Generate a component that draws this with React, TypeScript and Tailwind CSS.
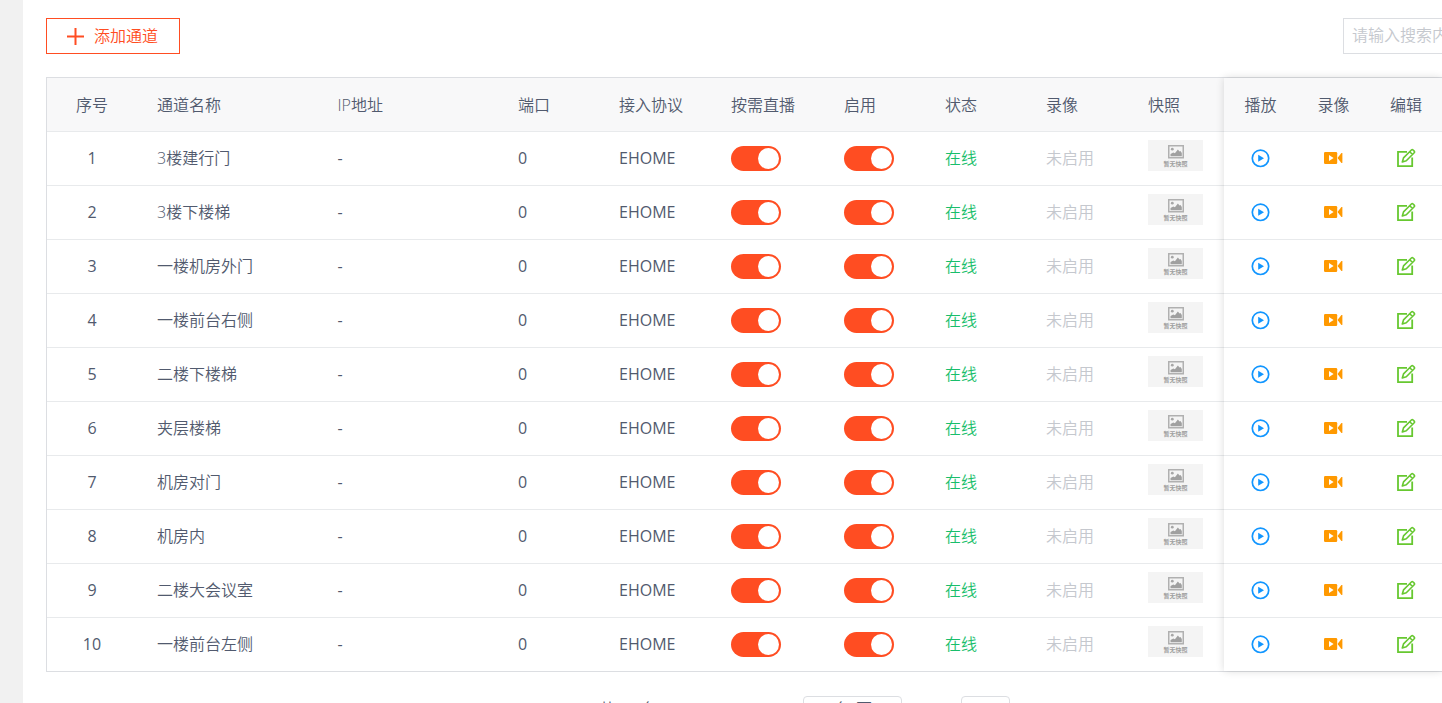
interface Channel {
  id: number;
  name: string;
}

const channels: Channel[] = [
  { id: 1, name: '3楼建行门' },
  { id: 2, name: '3楼下楼梯' },
  { id: 3, name: '一楼机房外门' },
  { id: 4, name: '一楼前台右侧' },
  { id: 5, name: '二楼下楼梯' },
  { id: 6, name: '夹层楼梯' },
  { id: 7, name: '机房对门' },
  { id: 8, name: '机房内' },
  { id: 9, name: '二楼大会议室' },
  { id: 10, name: '一楼前台左侧' },
];

function Switch({ label }: { label: string }) {
  return (
    <label className="relative block h-[25px] w-[50px] cursor-pointer">
      <input type="checkbox" defaultChecked aria-label={label} className="peer sr-only" />
      <span className="block h-full rounded-full bg-gray-300 peer-checked:bg-[#ff4d22]" />
      <span className="absolute top-[2px] left-[2px] size-[21px] rounded-full bg-white peer-checked:left-[27px]" />
    </label>
  );
}

function Snapshot() {
  return (
    <div className="flex h-[31px] w-[55px] flex-col items-center bg-[#f4f4f4] pt-[5px]">
      <svg viewBox="0 0 16 14" className="h-[14px] w-4" fill="none">
        <rect x="0.75" y="0.75" width="14.5" height="12" stroke="#b0b0b0" strokeWidth="1.5" />
        <circle cx="4.3" cy="4.2" r="1.4" fill="#a6a6a6" />
        <path d="M2.5 11.3V9l2.800-1.600 1.600.8 3-3.800 1.600 2 1-.4 1.300 2v3.300z" fill="#a0a0a0" />
      </svg>
      <span className="mt-px text-[6px] leading-[8px] font-bold text-[#a0a0a0]">暂无快照</span>
    </div>
  );
}

function PlayIcon() {
  return (
    <svg viewBox="0 0 20 20" className="size-5" fill="none">
      <circle cx="9.500" cy="10.300" r="8.200" stroke="#1296ff" strokeWidth="1.700" />
      <path d="M7.200 6.800v7l5.800-3.500z" fill="#1296ff" />
    </svg>
  );
}

function VideoIcon() {
  return (
    <svg viewBox="0 0 20 20" className="size-5">
      <rect x="0" y="4" width="13.200" height="12" rx="1.200" fill="#ff9900" />
      <path d="M13.900 9.400 17.200 5.200c.5-.5 1.200-.3 1.200.4v8.800c0 .7-.7.9-1.200.4l-3.300-4.200z" fill="#ff9900" />
      <path d="M5 7v6l4.600-3z" fill="#fff" />
    </svg>
  );
}

function EditIcon() {
  return (
    <svg viewBox="0 0 20 20" className="size-5" fill="none" stroke="#67c830">
      <path d="M11 3.800H2V18.200h14.200V9.400" strokeWidth="1.800" />
      <path d="m6.300 13.900 1.200-4 7.900-7.900c.5-.5 1.200-.5 1.700 0l1.100 1.100c.5.500.5 1.200 0 1.700l-7.900 7.900zM13.800 3.800l2.700 2.700" strokeWidth="1.600" strokeLinejoin="round" />
    </svg>
  );
}

export default function App() {
  return (
    <div className="h-screen overflow-hidden bg-[#f1f1f1] pl-[23px] font-['Open_Sans','Noto_Sans_CJK_SC',sans-serif] text-base leading-6 font-[350] text-[#515a6e]">
      <main className="h-full bg-white pt-[18px] pl-[23px]">
        <div className="flex items-center justify-between">
          <button className="flex h-9 w-[134px] items-center gap-[10px] border border-[#ff4d22] pl-5 text-[#ff4d22]">
            <svg viewBox="0 0 17 17" className="size-[17px]" stroke="currentColor" strokeWidth="2">
              <path d="M8.500 0v17M0 8.500h17" />
            </svg>
            添加通道
          </button>
          <div className="w-[99px] overflow-hidden">
            <input
              type="text"
              aria-label="搜索"
              placeholder="请输入搜索内容"
              className="block h-9 w-60 border border-[#dcdee2] px-2 pb-[2px] placeholder:text-[#c5c8ce]"
            />
          </div>
        </div>

        <div className="relative mt-[23px] border-y border-l border-[#dcdee2]">
          <table className="w-full table-fixed border-collapse">
            <colgroup>
              <col className="w-[90px]" />
              <col />
              <col />
              <col className="w-[101px]" />
              <col className="w-[112px]" />
              <col className="w-[113px]" />
              <col className="w-[101px]" />
              <col className="w-[101px]" />
              <col className="w-[102px]" />
              <col className="w-[96px]" />
              <col className="w-[73px]" />
              <col className="w-[73px]" />
              <col className="w-[72px]" />
            </colgroup>
            <thead>
              <tr className="h-[53px] border-b border-[#e8eaec] bg-[#f8f8f9] text-left">
                <th className="pt-[2px] text-center font-[350]">序号</th>
                <th className="pt-[2px] pl-5 font-[350]">通道名称</th>
                <th className="pt-[2px] pl-5 font-[350]">IP地址</th>
                <th className="pt-[2px] pl-5 font-[350]">端口</th>
                <th className="pt-[2px] pl-5 font-[350]">接入协议</th>
                <th className="pt-[2px] pl-5 font-[350]">按需直播</th>
                <th className="pt-[2px] pl-5 font-[350]">启用</th>
                <th className="pt-[2px] pl-5 font-[350]">状态</th>
                <th className="pt-[2px] pl-5 font-[350]">录像</th>
                <th className="pt-[2px] pl-5 font-[350]">快照</th>
                <th className="pt-[2px] text-center font-[350]">播放</th>
                <th className="pt-[2px] text-center font-[350]">录像</th>
                <th className="pt-[2px] text-center font-[350]">编辑</th>
              </tr>
            </thead>
            <tbody>
              {channels.map((channel) => (
                <tr key={channel.id} className="h-[54px] border-b border-[#e8eaec] last:border-0">
                  <td className="text-center font-normal">{channel.id}</td>
                  <td className="pl-5">{channel.name}</td>
                  <td className="pl-5 font-normal">-</td>
                  <td className="pl-5 font-normal">0</td>
                  <td className="pl-5 font-normal">EHOME</td>
                  <td className="pl-5"><Switch label={`${channel.name} 按需直播`} /></td>
                  <td className="pl-5"><Switch label={`${channel.name} 启用`} /></td>
                  <td className="pl-5 text-[#19be6b]">在线</td>
                  <td className="pl-5 text-[#c5c8ce]">未启用</td>
                  <td className="pb-[5px] pl-5"><Snapshot /></td>
                  <td>
                    <button aria-label="播放" className="mx-auto block"><PlayIcon /></button>
                  </td>
                  <td>
                    <button aria-label="录像" className="mx-auto block"><VideoIcon /></button>
                  </td>
                  <td>
                    <button aria-label="编辑" className="mx-auto block"><EditIcon /></button>
                  </td>
                </tr>
              ))}
            </tbody>
          </table>
          {/* shadow around the pinned action columns */}
          <div className="pointer-events-none absolute inset-y-0 right-0 w-[218px] shadow-[0_0_8px_rgba(0,0,0,0.14)]" />
        </div>

        <div className="mt-6 flex items-start pl-[553px]">
          <span className="w-[204px] leading-[26px]">共 11 条</span>
          <select aria-label="每页条数" className="h-[26px] w-[99px] appearance-none rounded border border-[#dcdee2] pl-2">
            <option>10 条/页</option>
          </select>
          <input type="text" aria-label="页码" defaultValue="1" className="ml-[59px] h-[26px] w-[49px] rounded border border-[#dcdee2] text-center" />
        </div>
      </main>
    </div>
  );
}
